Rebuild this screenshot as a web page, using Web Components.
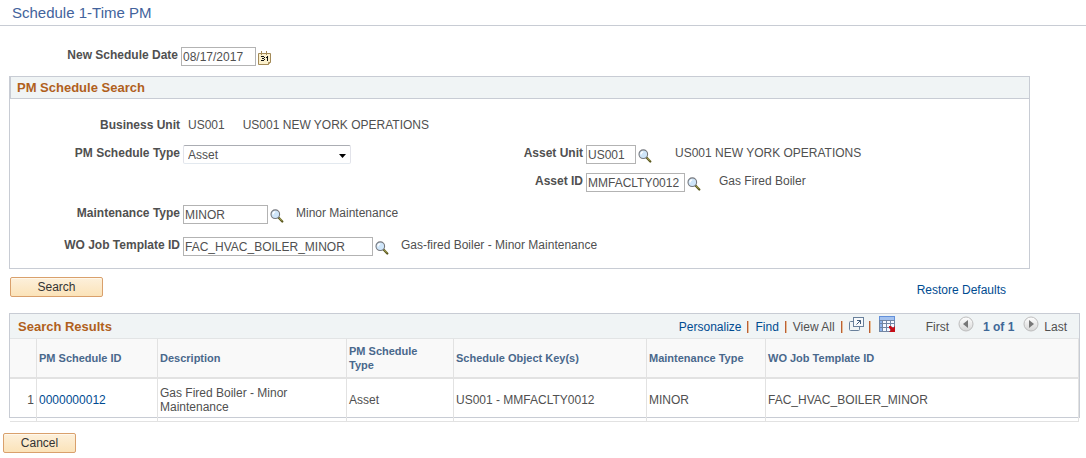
<!DOCTYPE html>
<html lang="en">
<head>
<meta charset="utf-8">
<title>Schedule 1-Time PM</title>
<style>
  body { margin: 0; background: #fff; color: #505050; font: 12px/16px "Liberation Sans", Arial, sans-serif; }
</style>
</head>
<body>
<pm-page heading="Schedule 1-Time PM">
  <pm-field slot="date" label="New Schedule Date" kind="date" value="08/17/2017" style="--control: 75px"></pm-field>
  <pm-group heading="PM Schedule Search">
    <pm-field slot="wide" label="Business Unit" kind="text" value="US001" description="US001 NEW YORK OPERATIONS" style="--lead: 18px"></pm-field>
    <pm-field slot="type" label="PM Schedule Type" kind="select" value="Asset" style="--control: 168px"></pm-field>
    <pm-field slot="unit" label="Asset Unit" kind="lookup" value="US001" description="US001 NEW YORK OPERATIONS" style="--control: 50px; --lead: 23px"></pm-field>
    <pm-field slot="asset" label="Asset ID" kind="lookup" value="MMFACLTY0012" description="Gas Fired Boiler" style="--control: 99px; --lead: 18px"></pm-field>
    <pm-field label="Maintenance Type" kind="lookup" value="MINOR" description="Minor Maintenance" style="--control: 85px"></pm-field>
    <pm-field label="WO Job Template ID" kind="lookup" value="FAC_HVAC_BOILER_MINOR" description="Gas-fired Boiler - Minor Maintenance" style="--control: 190px"></pm-field>
  </pm-group>
  <pm-button slot="search" style="--width: 93px">Search</pm-button>
  <pm-link slot="restore">Restore Defaults</pm-link>
  <pm-results slot="results"></pm-results>
  <pm-button slot="cancel" style="--width: 73px">Cancel</pm-button>
</pm-page>

<script>
class PmElement extends HTMLElement {
  constructor() {
    super();
    this.attachShadow({ mode: "open" });
  }
  connectedCallback() {
    this.shadowRoot.innerHTML = this.render();
  }
  attr(name) {
    return this.getAttribute(name) || "";
  }
}

const lookupIcon = `<svg width="14" height="14" viewBox="0 0 14 14" aria-hidden="true">
  <path d="M8.5 8.5 12.3 12.5" stroke="#5a581f" stroke-width="2.2" stroke-linecap="round"/>
  <path d="M9 8.6 12 11.7" stroke="#b5b05e" stroke-width="1"/>
  <circle cx="5.3" cy="5.2" r="4.3" fill="#cfe6fa" stroke="#74777d" stroke-width="1.1"/>
  <path d="M3 5.4A2.6 2.6 0 0 1 5.2 2.9" fill="none" stroke="#fff" stroke-width="1.4"/>
</svg>`;

const calendarIcon = `<svg width="13" height="14" viewBox="0 0 13 14" aria-hidden="true">
  <path d="M.5 2.5H12.5V11L10.5 13.5H.5Z" fill="#fbf0cc" stroke="#a38a58"/>
  <path d="M10.5 13.5V11.5H12.5" fill="#d9b979" stroke="#a38a58"/>
  <path d="M3.5 0V4M8.5 0V4" stroke="#a38a58"/>
  <path d="M3 5.5H6M4 7.5H6M3 9.5H6M6.5 6V7M6.5 8V9M8 6.5H10M9.5 5V10" fill="none" stroke="#111"/>
</svg>`;

customElements.define("pm-field", class extends PmElement {
  control() {
    const value = this.attr("value");
    switch (this.attr("kind")) {
      case "text":
        return `<output id="control">${value}</output>`;
      case "select":
        return `<span class="select"><select id="control"><option>${value}</option></select>
          <svg width="7" height="4" viewBox="0 0 7 4" aria-hidden="true"><path d="M0 0H7L3.5 4Z" fill="#000"/></svg></span>`;
      case "date":
        return `<input id="control" type="text" value="${value}"><button type="button" aria-label="Choose a date">${calendarIcon}</button>`;
      default:
        return `<input id="control" type="text" value="${value}"><button type="button" aria-label="Look up ${this.attr("label")}">${lookupIcon}</button>`;
    }
  }
  render() {
    return `<style>
      :host { display: flex; align-items: flex-start; height: 19px; white-space: nowrap; }
      label { width: 170px; margin-right: 3px; text-align: right; font-weight: bold; flex: none; }
      output { margin-left: 5px; }
      input, select { box-sizing: border-box; width: var(--control); height: 19px; margin: 0; color: inherit; font: inherit; background: #fff; border: 1px solid #b3b3b3; border-radius: 0; }
      input { padding: 0 1px; }
      .select { position: relative; }
      select { display: block; appearance: none; padding: 0 4px; border-color: #abadb3 #e2e3ea #e3e9ef; border-radius: 2px; }
      .select svg { position: absolute; right: 5px; top: 9px; }
      button { display: flex; margin: 4px 0 0 2px; padding: 0; border: 0; background: none; }
      .description { margin-left: var(--lead, 12px); }
    </style>
    <label for="control">${this.attr("label")}</label>${this.control()}
    <span class="description">${this.attr("description")}</span>`;
  }
});

customElements.define("pm-group", class extends PmElement {
  render() {
    return `<style>
      :host { display: block; border: 1px solid #c8ccd4; }
      h2 { margin: 0; padding: 0 6px; font-size: 13px; line-height: 21px; color: #b0601c; background: #f0f4f5; border-bottom: 1px solid #c8ccd4; border-left: 1px solid #c8ccd4; }
      .fields { display: grid; grid-template-columns: 403px 1fr; row-gap: 9px; padding-top: 18px; }
      ::slotted([slot="wide"]) { grid-column: 1 / -1; }
      ::slotted([slot="asset"]) { grid-column: 2; }
      .more { display: grid; row-gap: 13px; padding: 13px 0 12px; }
    </style>
    <h2>${this.attr("heading")}</h2>
    <div class="fields">
      <slot name="wide"></slot>
      <slot name="type"></slot><slot name="unit"></slot>
      <slot name="asset"></slot>
    </div>
    <div class="more"><slot></slot></div>`;
  }
});

customElements.define("pm-button", class extends PmElement {
  render() {
    return `<style>
      :host { display: block; }
      button { display: block; box-sizing: border-box; width: var(--width); height: 20px; margin: 0; padding: 0; color: #333; font: inherit; line-height: 18px; background: linear-gradient(#fdf0db, #fbe3b9); border: 1px solid #d9a06c; border-radius: 2px; box-shadow: inset 0 1px #fff8ec; }
    </style>
    <button type="button"><slot></slot></button>`;
  }
});

customElements.define("pm-link", class extends PmElement {
  render() {
    return `<style>
      :host { display: block; }
      a { color: #004b91; text-decoration: none; }
    </style>
    <a href="#"><slot></slot></a>`;
  }
});

customElements.define("pm-pager", class extends PmElement {
  arrow(label, path) {
    return `<button type="button" aria-label="${label}"><svg width="16" height="16" viewBox="0 0 16 16" aria-hidden="true">
      <defs><linearGradient id="g" x2="0" y2="1"><stop stop-color="#fff"/><stop offset="1" stop-color="#d6d6d6"/></linearGradient></defs>
      <circle cx="8" cy="8" r="7" fill="url(#g)" stroke="#bdbdbd"/><path d="${path}" fill="#777"/></svg></button>`;
  }
  render() {
    return `<style>
      :host { display: flex; align-items: center; }
      button { display: flex; margin: 0 9px 6px; padding: 0; border: 0; background: none; }
      button:last-of-type { margin-right: 5px; }
      b { color: #3f6897; }
    </style>
    <span>First</span>${this.arrow("Previous", "M10 4V12L5 8Z")}<b>1 of 1</b>${this.arrow("Next", "M6 4V12L11 8Z")}<span>Last</span>`;
  }
});

customElements.define("pm-results", class extends PmElement {
  render() {
    return `<style>
      :host { display: block; border: 1px solid #c8ccd4; }
      header { display: flex; align-items: center; box-sizing: border-box; height: 25px; padding: 2px 12px 0 8px; background: #f0f4f5; border-bottom: 1px solid #e2e4e5; }
      h2 { flex: 1; margin: 0; font-size: 13px; line-height: 16px; color: #b0601c; }
      nav { display: flex; align-items: center; margin-right: 30px; }
      i { width: 1px; height: 12px; margin: 0 6px; background: #bb6034; border-right: 1px solid #e6bd98; }
      i:last-of-type { margin: 0 8px 0 4px; }
      nav button { display: flex; margin: 0 0 6px; padding: 0; border: 0; background: none; }
      table { width: 100%; table-layout: fixed; border-collapse: separate; border-spacing: 0; margin-bottom: -5px; }
      th, td { box-sizing: border-box; padding: 0 2px; text-align: left; line-height: 14px; border-right: 1px solid #e2e2e2; }
      th { height: 40px; padding-right: 12px; font-size: 11px; color: #49688c; background: #f9f9f9; border-bottom: 2px solid #e2e2e2; }
      td { height: 43px; border-bottom: 1px solid #e2e2e2; }
      td:first-child { text-align: right; }
      a { color: #004b91; text-decoration: none; }
    </style>
    <header>
      <h2>Search Results</h2>
      <nav>
        <pm-link>Personalize</pm-link><i></i><pm-link>Find</pm-link><i></i><span>View All</span><i></i>
        <button type="button" aria-label="Zoom"><svg width="16" height="14" viewBox="0 0 16 14" aria-hidden="true">
          <path d="M4 4.5H1.5Q.5 4.5 .5 5.5V12.5Q.5 13.5 1.5 13.5H9.5Q10.5 13.5 10.5 12.5V10" fill="none" stroke="#69809b"/>
          <rect x="4.5" y=".5" width="10" height="9" fill="#f8fafc" stroke="#69809b"/>
          <path d="M7.5 7.5 11.5 3.5M8 3.5H11.5V7" fill="none" stroke="#415b7b"/></svg></button><i></i>
        <button type="button" aria-label="Download"><svg width="17" height="17" viewBox="0 0 17 17" aria-hidden="true">
          <rect width="16" height="16" fill="#7186a4"/>
          <rect width="16" height="4" fill="#6390da"/><rect x="1" y="1" width="14" height="3" fill="#a4c2ef"/>
          <path d="M1 5H3V7H1ZM1 8H3V11H1ZM1 12H3V15H1Z" fill="#8eb4ed"/>
          <path d="M4 5H7V7H4ZM8 5H11V7H8ZM12 5H15V7H12ZM4 8H7V11H4ZM8 8H11V11H8ZM12 8H15V11H12ZM4 12H7V15H4ZM8 12H11V15H8Z" fill="#f4f8ff"/>
          <path d="M10 10H12L14 12L16 10V16H10L12 14L10 12Z" fill="#c50d16"/></svg></button>
      </nav>
      <pm-pager></pm-pager>
    </header>
    <table>
      <colgroup><col style="width:27px"><col style="width:121px"><col style="width:189px"><col style="width:107px"><col style="width:193px"><col style="width:119px"><col></colgroup>
      <thead><tr><th></th><th>PM Schedule ID</th><th>Description</th><th>PM Schedule Type</th><th>Schedule Object Key(s)</th><th>Maintenance Type</th><th>WO Job Template ID</th></tr></thead>
      <tbody><tr><td>1</td><td><a href="#">0000000012</a></td><td>Gas Fired Boiler - Minor Maintenance</td><td>Asset</td><td>US001 - MMFACLTY0012</td><td>MINOR</td><td>FAC_HVAC_BOILER_MINOR</td></tr></tbody>
    </table>`;
  }
});

customElements.define("pm-page", class extends PmElement {
  render() {
    return `<style>
      :host { display: block; }
      h1 { margin: 0; padding: 0 12px; font-size: 15px; font-weight: normal; line-height: 25px; color: #42639c; border-bottom: 1px solid #c8ccd4; }
      .date { padding: 21px 0 10px 8px; }
      .group { margin: 0 56px 0 9px; }
      .actions { display: flex; justify-content: space-between; align-items: flex-start; margin: 8px 80px 0 10px; }
      .restore { padding-top: 5px; }
      .results { margin: 15px 6px 15px 9px; }
      .cancel { margin-left: 3px; }
    </style>
    <h1>${this.attr("heading")}</h1>
    <div class="date"><slot name="date"></slot></div>
    <div class="group"><slot></slot></div>
    <div class="actions"><slot name="search"></slot><div class="restore"><slot name="restore"></slot></div></div>
    <div class="results"><slot name="results"></slot></div>
    <div class="cancel"><slot name="cancel"></slot></div>`;
  }
});
</script>
</body>
</html>
